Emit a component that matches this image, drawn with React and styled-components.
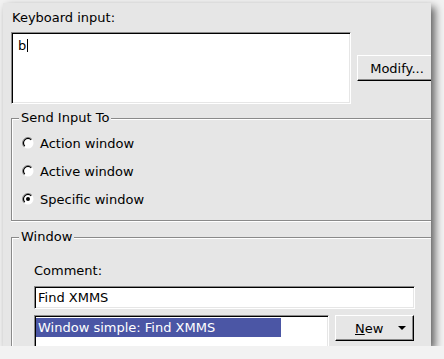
import React from 'react'
import styled, { createGlobalStyle } from 'styled-components'

const GlobalStyle = createGlobalStyle`
  body {
    margin: 0;
    background: #f2f2f2;
    font-family: "DejaVu Sans", "Liberation Sans", sans-serif;
    font-size: 13px;
    color: #000;
  }
`

const Window = styled.div`
  box-sizing: border-box;
  margin: 3px 0 0 3px;
  width: 428px;
  height: 343px;
  padding: 7px 0 0 8px;
  background: #e6e6e6;
  overflow: hidden;
  box-shadow: 4px 4px 8px rgba(0, 0, 0, 0.6);
`

const Label = styled.div`
  line-height: 16px;
  margin: 0 0 ${({ gap }) => gap || 0}px ${({ indent }) => indent || 0}px;
  white-space: nowrap;
`

const InputRow = styled.div`
  display: flex;
  align-items: center;
  gap: 6px;
`

const Sunken = styled.div`
  box-sizing: border-box;
  width: ${({ w }) => w}px;
  height: ${({ h }) => h}px;
  background: #fff;
  border: 1px solid;
  border-color: #8a8a8a #fff #fff #8a8a8a;
  box-shadow: inset 1px 1px 0 #000, inset -1px -1px 0 #e6e6e6;
  padding: ${({ pad }) => pad || '0'};
  line-height: 16px;
  white-space: nowrap;
  flex-shrink: 0;
`

const Caret = styled.span`
  display: inline-block;
  width: 1px;
  height: 13px;
  margin-left: 1px;
  background: #000;
  vertical-align: -2px;
`

const Button = styled.div`
  box-sizing: border-box;
  flex-shrink: 0;
  width: ${({ w }) => w}px;
  height: 26px;
  display: flex;
  align-items: center;
  justify-content: ${({ split }) => (split ? 'space-between' : 'center')};
  padding: ${({ split }) => (split ? '0 7px 0 19px' : '0')};
  border: 1px solid;
  border-color: #fff #000 #000 #fff;
  box-shadow: inset -1px -1px 0 #8a8a8a;
  background: #e6e6e6;
  white-space: nowrap;
`

const Mnemonic = styled.span`
  text-decoration: underline;
`

const Arrow = styled.span`
  width: 0;
  height: 0;
  border-left: 4px solid transparent;
  border-right: 4px solid transparent;
  border-top: 4px solid #000;
`

const Group = styled.fieldset`
  box-sizing: border-box;
  width: 432px;
  min-width: 0;
  margin: ${({ top }) => top}px 0 0 0;
  padding: 0;
  border: 1px solid #8a8a8a;
  box-shadow: inset 1px 1px 0 #fff, 0 1px 0 #fff;
`

const Legend = styled.legend`
  margin-left: 7px;
  padding: 0 2px;
  line-height: 16px;
  background: #e6e6e6;
`

const GroupBody = styled.div`
  padding: ${({ pad }) => pad};
`

const RadioRow = styled.label`
  display: flex;
  align-items: center;
  gap: 6px;
  height: 28px;
`

const Radio = ({ checked }) => (
  <svg width="12" height="12" viewBox="0 0 12 12">
    <circle cx="6" cy="6" r="5.5" fill="#fff" />
    <path d="M9.9 2.1 A5.5 5.5 0 0 0 2.1 9.9" fill="none" stroke="#8a8a8a" strokeWidth="1" />
    <path d="M9.2 2.8 A4.5 4.5 0 0 0 2.8 9.2" fill="none" stroke="#000" strokeWidth="1.2" />
    {checked && <circle cx="6" cy="6" r="2" fill="#000" />}
  </svg>
)

const ListRow = styled.div`
  display: flex;
  align-items: flex-start;
  gap: 6px;
  margin-top: 6px;
`

const ListBox = styled(Sunken)`
  padding: 2px 0 0 1px;
`

const Selected = styled.div`
  width: 245px;
  height: 19px;
  line-height: 19px;
  padding-left: 2px;
  box-sizing: border-box;
  background: #4b56a5;
  color: #fff;
`

const App = () => {
  return (
    <>
      <GlobalStyle />
      <Window>
        <Label gap={6} indent={1}>Keyboard input:</Label>
        <InputRow>
          <Sunken w={340} h={72} pad="5px 6px">
            b<Caret />
          </Sunken>
          <Button w={80}>Modify...</Button>
        </InputRow>

        <Group top={6}>
          <Legend>Send Input To</Legend>
          <GroupBody pad="3px 0 7px 10px">
            <RadioRow><Radio />Action window</RadioRow>
            <RadioRow><Radio />Active window</RadioRow>
            <RadioRow><Radio checked />Specific window</RadioRow>
          </GroupBody>
        </Group>

        <Group top={8}>
          <Legend>Window</Legend>
          <GroupBody pad="18px 0 0 22px">
            <Label gap={7}>Comment:</Label>
            <Sunken w={381} h={23} pad="3px 3px">Find XMMS</Sunken>
            <ListRow>
              <ListBox w={295} h={60}>
                <Selected>Window simple: Find XMMS</Selected>
              </ListBox>
              <Button w={79} split>
                <span><Mnemonic>N</Mnemonic>ew</span>
                <Arrow />
              </Button>
            </ListRow>
          </GroupBody>
        </Group>
      </Window>
    </>
  )
}

export default App
